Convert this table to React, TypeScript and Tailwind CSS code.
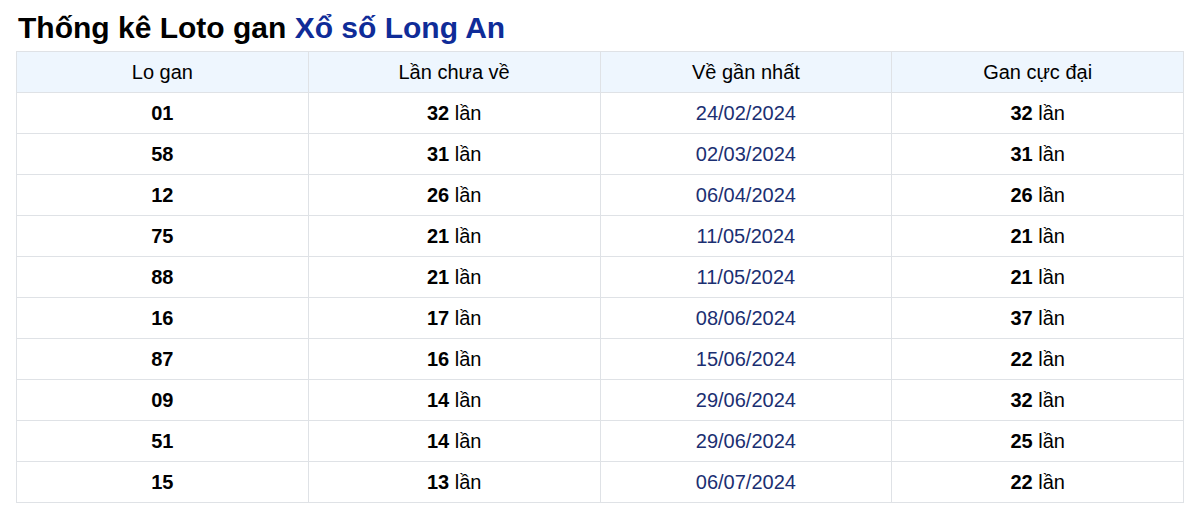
const rows = [
  { lo: "01", chua: 32, date: "24/02/2024", max: 32 },
  { lo: "58", chua: 31, date: "02/03/2024", max: 31 },
  { lo: "12", chua: 26, date: "06/04/2024", max: 26 },
  { lo: "75", chua: 21, date: "11/05/2024", max: 21 },
  { lo: "88", chua: 21, date: "11/05/2024", max: 21 },
  { lo: "16", chua: 17, date: "08/06/2024", max: 37 },
  { lo: "87", chua: 16, date: "15/06/2024", max: 22 },
  { lo: "09", chua: 14, date: "29/06/2024", max: 32 },
  { lo: "51", chua: 14, date: "29/06/2024", max: 25 },
  { lo: "15", chua: 13, date: "06/07/2024", max: 22 },
];

const cell = "h-[41px] border border-[#dfe2e6] text-center align-middle";

export default function App() {
  return (
    <div className="bg-white px-4 pt-[10px] font-['Liberation_Sans',Arial,sans-serif] text-[20px] text-black">
      <h1 className="mb-[5px] pl-[2px] text-[30px] font-bold leading-[36px]">
        Thống kê Loto gan <span className="text-[#0f2c98]">Xổ số Long An</span>
      </h1>
      <table className="w-[1168px] table-fixed border-collapse">
        <thead>
          <tr className="bg-[#eef6fe]">
            <th className={cn(cell, "font-normal")}>Lo gan</th>
            <th className={cn(cell, "font-normal")}>Lần chưa về</th>
            <th className={cn(cell, "font-normal")}>Về gần nhất</th>
            <th className={cn(cell, "font-normal")}>Gan cực đại</th>
          </tr>
        </thead>
        <tbody>
          {rows.map((r) => (
            <tr key={r.lo}>
              <td className={cn(cell, "font-bold")}>{r.lo}</td>
              <td className={cell}>
                <b>{r.chua}</b> lần
              </td>
              <td className={cn(cell, "text-[#1b2f72]")}>{r.date}</td>
              <td className={cell}>
                <b>{r.max}</b> lần
              </td>
            </tr>
          ))}
        </tbody>
      </table>
    </div>
  );
}

function cn(...c: string[]) {
  return c.join(" ");
}
